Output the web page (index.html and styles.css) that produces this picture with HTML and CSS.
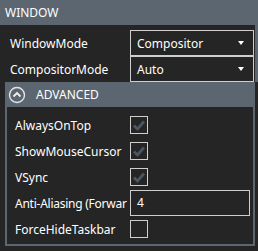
FILE: index.html
```html
<!DOCTYPE html>
<html>
<head>
<meta charset="utf-8">
<link rel="stylesheet" href="styles.css">
</head>
<body>
<div class="header">WINDOW</div>
<div class="main">
  <div class="content">
    <div class="row">
      <div class="label">WindowMode</div>
      <div class="select"><span>Compositor</span><span class="arrow"></span></div>
    </div>
    <div class="row">
      <div class="label">CompositorMode</div>
      <div class="select"><span>Auto</span><span class="arrow"></span></div>
    </div>
    <div class="panel">
      <div class="panel-head">
        <svg class="chev" width="18" height="18" viewBox="0 0 18 18">
          <circle cx="9" cy="9" r="7.5" fill="none" stroke="#e6e6e6" stroke-width="1.4"/>
          <polyline points="5.5,10.5 9,7 12.5,10.5" fill="none" stroke="#f0f0f0" stroke-width="1.8"/>
        </svg>
        <span>ADVANCED</span>
      </div>
      <div class="rows">
        <div class="prow">
          <div class="plabel">AlwaysOnTop</div>
          <div class="check"><svg width="16" height="16" viewBox="0 0 16 16"><polyline points="3,8.5 6.5,12 13,4.5" fill="none" stroke="#4a5663" stroke-width="2.8"/></svg></div>
        </div>
        <div class="prow">
          <div class="plabel">ShowMouseCursor</div>
          <div class="check"><svg width="16" height="16" viewBox="0 0 16 16"><polyline points="3,8.5 6.5,12 13,4.5" fill="none" stroke="#4a5663" stroke-width="2.8"/></svg></div>
        </div>
        <div class="prow">
          <div class="plabel">VSync</div>
          <div class="check"><svg width="16" height="16" viewBox="0 0 16 16"><polyline points="3,8.5 6.5,12 13,4.5" fill="none" stroke="#4a5663" stroke-width="2.8"/></svg></div>
        </div>
        <div class="prow">
          <div class="plabel tight">Anti-Aliasing (Forwar</div>
          <div class="input">4</div>
        </div>
        <div class="prow">
          <div class="plabel">ForceHideTaskbar</div>
          <div class="check"></div>
        </div>
      </div>
    </div>
  </div>
  <div class="scroll"><div class="thumb"></div></div>
</div>
</body>
</html>
```
FILE: styles.css
```css
html, body {
  margin: 0;
  padding: 0;
}
body {
  width: 258px;
  height: 251px;
  overflow: hidden;
  background: #252525;
  color: #ffffff;
  font-family: "Noto Sans", "Open Sans", sans-serif;
  font-size: 12px;
}
.header {
  height: 25px;
  line-height: 25px;
  background: #5b6670;
  padding-left: 5px;
  font-size: 12px;
}
.main {
  display: flex;
}
.content {
  width: 255px;
  padding-top: 5px;
}
.scroll {
  width: 3px;
}
.thumb {
  height: 57px;
  background: #5b6670;
}
.row {
  display: flex;
  align-items: center;
  height: 26px;
}
.label {
  width: 120px;
  padding-left: 10px;
  white-space: nowrap;
}
.select {
  box-sizing: border-box;
  width: 124px;
  height: 26px;
  border: 1px solid #cfcfcf;
  display: flex;
  align-items: center;
  justify-content: space-between;
  padding: 0 9px 0 6px;
}
.arrow {
  width: 0;
  height: 0;
  border-left: 3px solid transparent;
  border-right: 3px solid transparent;
  border-top: 4px solid #ffffff;
}
.panel {
  box-sizing: border-box;
  margin-left: 5px;
  width: 250px;
  height: 164px;
  border: 2px solid #5b6670;
  border-top: none;
}
.panel-head {
  height: 25px;
  margin: 0 -2px;
  background: #5b6670;
  display: flex;
  align-items: center;
  padding-left: 3px;
  gap: 10px;
}
.chev {
  display: block;
}
.rows {
  padding-top: 5px;
}
.prow {
  display: flex;
  align-items: center;
  height: 26px;
}
.plabel {
  width: 115px;
  padding-left: 8px;
  white-space: nowrap;
}
.tight {
  letter-spacing: -0.25px;
}
.check {
  box-sizing: border-box;
  width: 18px;
  height: 18px;
  border: 1px solid #cfcfcf;
  display: flex;
  align-items: center;
  justify-content: center;
}
.check svg {
  display: block;
}
.input {
  box-sizing: border-box;
  width: 120px;
  height: 26px;
  border: 1px solid #cfcfcf;
  padding-left: 6px;
  line-height: 24px;
}
```
